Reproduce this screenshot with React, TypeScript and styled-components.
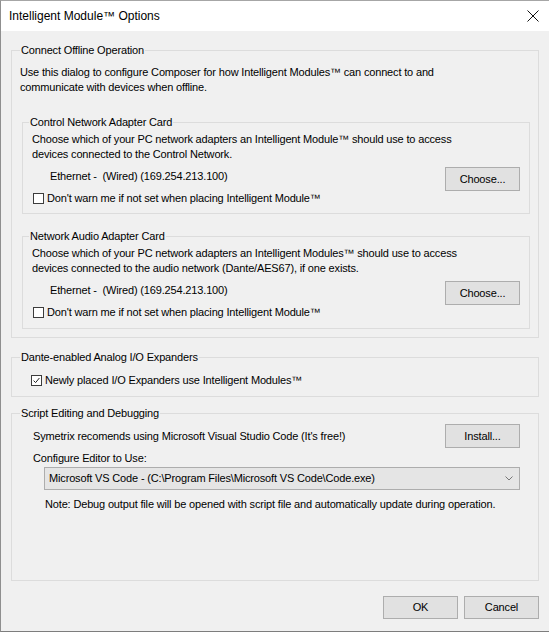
import React from "react";
import styled, { createGlobalStyle } from "styled-components";

const Global = createGlobalStyle`
  html, body { margin: 0; padding: 0; background: #ffffff; }
  body { font-family: "Liberation Sans", Arial, sans-serif; }
  * { box-sizing: border-box; }
`;

const Window = styled.div`
  width: 549px;
  height: 632px;
  border-left: 1px solid #8f8f8f;
  border-top: 1px solid #a6a6a6;
  border-bottom: 1px solid #7d7d7d;
  background: #f0f0f0;
  display: flex;
  flex-direction: column;
  font: 11px/15px "Liberation Sans", Arial, sans-serif;
  letter-spacing: -0.16px;
  color: #000;
`;

const TitleBar = styled.div`
  height: 30px;
  flex: none;
  background: #ffffff;
  display: flex;
  align-items: center;
  justify-content: space-between;
  padding: 0 9px 0 8px;
  font-size: 12px;
  letter-spacing: 0;
`;

const CloseButton = styled.div`
  width: 14px;
  height: 14px;
  display: flex;
  align-items: center;
  justify-content: center;
`;

const Body = styled.div`
  flex: 1;
  display: flex;
  flex-direction: column;
  padding: 12px 10px 0 10px;
`;

const Group = styled.fieldset<{ $gap?: number; $grow?: boolean; $padBottom?: number }>`
  margin: ${(p) => p.$gap ?? 0}px 0 0 0;
  border: 1px solid #dcdcdc;
  padding: 0 8px ${(p) => p.$padBottom ?? 8}px 8px;
  min-width: 0;
  display: flex;
  flex-direction: column;
  ${(p) => (p.$grow ? "flex: 1;" : "")}
`;

const Legend = styled.legend`
  padding: 0 1px;
  margin-left: 0;
  line-height: 15px;
`;

const SubGroup = styled.fieldset<{ $gap: number; $padBottom: number }>`
  margin: ${(p) => p.$gap}px 0 0 2px;
  border: 1px solid #dcdcdc;
  padding: 0 9px ${(p) => p.$padBottom}px 9px;
  min-width: 0;
`;

const SubLegend = styled.legend`
  padding: 0 1px;
  margin-left: -3px;
  line-height: 15px;
`;

const Text = styled.div<{ $top?: number; $left?: number }>`
  margin-top: ${(p) => p.$top ?? 0}px;
  margin-left: ${(p) => p.$left ?? 0}px;
  white-space: nowrap;
`;

const AdapterRow = styled.div`
  margin-top: 5px;
  height: 24px;
  display: flex;
  align-items: flex-start;
  justify-content: space-between;
`;

const AdapterName = styled.div`
  margin: 2px 0 0 18px;
  white-space: pre;
`;

const ActionRow = styled.div`
  margin-top: 3px;
  height: 24px;
  display: flex;
  align-items: center;
  justify-content: space-between;
  padding-left: 13px;
  padding-right: 10px;
`;

const PushButton = styled.button<{ $h?: number }>`
  width: 75px;
  height: ${(p) => p.$h ?? 24}px;
  background: #e1e1e1;
  border: 1px solid #adadad;
  border-radius: 0;
  padding: 0;
  font: inherit;
  letter-spacing: inherit;
  color: #000;
`;

const CheckRow = styled.label<{ $top?: number; $left?: number }>`
  display: flex;
  align-items: center;
  gap: 3px;
  margin-top: ${(p) => p.$top ?? 0}px;
  margin-left: ${(p) => p.$left ?? 0}px;
  height: 15px;
  white-space: nowrap;
`;

const Box = styled.span`
  width: 11px;
  height: 11px;
  flex: none;
  background: #ffffff;
  border: 1px solid #3c3c3c;
  display: flex;
  align-items: center;
  justify-content: center;
`;

const Select = styled.div`
  margin: 1px 10px 0 24px;
  height: 23px;
  background: #e5e5e5;
  border: 1px solid #adadad;
  display: flex;
  align-items: center;
  justify-content: space-between;
  padding: 0 6px 0 4px;
  white-space: nowrap;
`;

const Footer = styled.div`
  flex: none;
  display: flex;
  justify-content: flex-end;
  gap: 6px;
  padding: 15px 10px 12px 0;
`;

function CheckBox({ checked, label, top, left }: { checked?: boolean; label: string; top?: number; left?: number }) {
  return (
    <CheckRow $top={top} $left={left}>
      <Box>
        {checked && (
          <svg width="7" height="7" viewBox="0 0 7 7">
            <path d="M0.6 3.6 L2.6 5.6 L6.4 1" fill="none" stroke="#222" strokeWidth="1" />
          </svg>
        )}
      </Box>
      {label}
    </CheckRow>
  );
}

function AdapterCard({
  title,
  lines,
  gap,
  padBottom,
}: {
  title: string;
  lines: [string, string];
  gap: number;
  padBottom: number;
}) {
  return (
    <SubGroup $gap={gap} $padBottom={padBottom}>
      <SubLegend>{title}</SubLegend>
      <Text $top={2}>{lines[0]}</Text>
      <Text>{lines[1]}</Text>
      <AdapterRow>
        <AdapterName>Ethernet -  (Wired) (169.254.213.100)</AdapterName>
        <PushButton>Choose...</PushButton>
      </AdapterRow>
      <CheckBox label="Don't warn me if not set when placing Intelligent Module™" left={1} />
    </SubGroup>
  );
}

export default function App() {
  return (
    <>
      <Global />
      <Window>
        <TitleBar>
          <span>Intelligent Module™ Options</span>
          <CloseButton>
            <svg width="12" height="12" viewBox="0 0 12 12">
              <path d="M0.5 0.5 L11.5 11.5 M11.5 0.5 L0.5 11.5" stroke="#111" strokeWidth="1" />
            </svg>
          </CloseButton>
        </TitleBar>
        <Body>
          <Group>
            <Legend>Connect Offline Operation</Legend>
            <Text $top={7}>
              Use this dialog to configure Composer for how Intelligent Modules™ can connect to and
            </Text>
            <Text>communicate with devices when offline.</Text>
            <AdapterCard
              gap={20}
              padBottom={7}
              title="Control Network Adapter Card"
              lines={[
                "Choose which of your PC network adapters an Intelligent Module™ should use to access",
                "devices connected to the Control Network.",
              ]}
            />
            <AdapterCard
              gap={15}
              padBottom={8}
              title="Network Audio Adapter Card"
              lines={[
                "Choose which of your PC network adapters an Intelligent Modules™ should use to access",
                "devices connected to the audio network (Dante/AES67), if one exists.",
              ]}
            />
          </Group>
          <Group $gap={12}>
            <Legend>Dante-enabled Analog I/O Expanders</Legend>
            <CheckBox checked top={8} left={11} label="Newly placed I/O Expanders use Intelligent Modules™" />
          </Group>
          <Group $gap={9} $grow>
            <Legend>Script Editing and Debugging</Legend>
            <ActionRow>
              <span>Symetrix recomends using Microsoft Visual Studio Code (It's free!)</span>
              <PushButton>Install...</PushButton>
            </ActionRow>
            <Text $top={3} $left={13}>Configure Editor to Use:</Text>
            <Select>
              <span>Microsoft VS Code - (C:\Program Files\Microsoft VS Code\Code.exe)</span>
              <svg width="8" height="5" viewBox="0 0 8 5">
                <path d="M0.5 0.5 L4 4 L7.5 0.5" fill="none" stroke="#777" strokeWidth="1" />
              </svg>
            </Select>
            <Text $top={7} $left={25}>
              Note: Debug output file will be opened with script file and automatically update during operation.
            </Text>
          </Group>
        </Body>
        <Footer>
          <PushButton $h={23}>OK</PushButton>
          <PushButton $h={23}>Cancel</PushButton>
        </Footer>
      </Window>
    </>
  );
}
